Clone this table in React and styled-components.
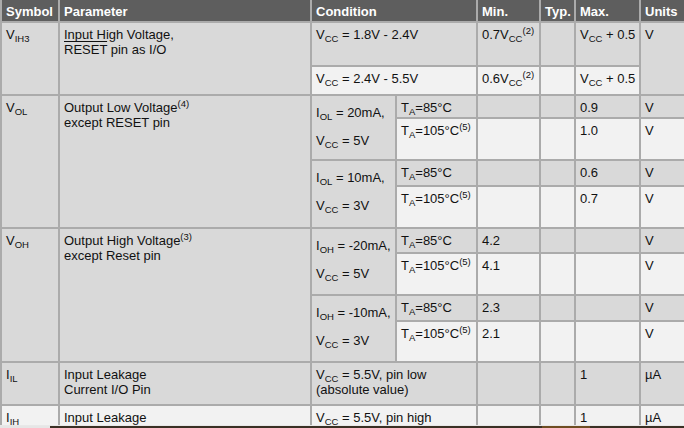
import React from 'react';
import styled, { createGlobalStyle } from 'styled-components';

const Global = createGlobalStyle`
  html, body {
    margin: 0;
    padding: 0;
    background: #f2f2f2;
    overflow: hidden;
  }
  body {
    font-family: "Liberation Sans", Arial, sans-serif;
  }
`;

const Page = styled.div`
  width: 684px;
  height: 428px;
  display: flex;
  flex-direction: column;
  overflow: hidden;
`;

const Frame = styled.div`
  height: 425px;
  overflow: hidden;
  flex: none;
`;

const Table = styled.table`
  width: 688px;
  table-layout: fixed;
  border-collapse: collapse;
  font-size: 13px;
  line-height: 15px;
  color: #111111;
`;

const Th = styled.th`
  background: #5e5e5e;
  color: #ffffff;
  font-weight: bold;
  text-align: left;
  padding: 3px 4px 2px;
  border: 2px solid #ababab;
  border-top: none;
  white-space: nowrap;
  overflow: hidden;
`;

const Td = styled.td`
  background: ${p => (p.$tone === 'light' ? '#f2f2f2' : '#d9d9d9')};
  vertical-align: top;
  text-align: left;
  padding: 4px 4px 2px;
  border: 2px solid #ababab;
  white-space: nowrap;
`;

const Tr = styled.tr`
  height: ${p => p.$h}px;
`;

const Sub = styled.sub`
  font-size: 9.5px;
  line-height: 0;
  vertical-align: -3px;
`;

const Sup = styled.sup`
  font-size: 9.5px;
  line-height: 0;
  vertical-align: 5px;
`;

const Over = styled.span`
  text-decoration: overline;
`;

const CondLines = styled.div`
  line-height: 28px;
  margin-top: -1px;
`;

const Strip = styled.div`
  height: 3px;
  display: flex;
  flex: none;
  border-top: 1px solid #e8e8e8;
`;

const StripPart = styled.div`
  width: ${p => p.$w}px;
  background: ${p => p.$c};
  flex: ${p => (p.$w ? 'none' : '1')};
`;

const V = ({ s }) => (
  <>
    V<Sub>{s}</Sub>
  </>
);

const I = ({ s }) => (
  <>
    I<Sub>{s}</Sub>
  </>
);

const Ta = ({ hot }) =>
  hot ? (
    <>
      T<Sub>A</Sub>=105°C<Sup>(5)</Sup>
    </>
  ) : (
    <>
      T<Sub>A</Sub>=85°C
    </>
  );

const TempRows = ({ sym, param, groups }) =>
  groups.map((g, gi) => (
    <React.Fragment key={gi}>
      <Tr $h={g.h[0]}>
        {gi === 0 && (
          <>
            <Td rowSpan={4}>{sym}</Td>
            <Td rowSpan={4}>{param}</Td>
          </>
        )}
        <Td rowSpan={2}>
          <CondLines>
            <div>{g.cond[0]}</div>
            <div>{g.cond[1]}</div>
          </CondLines>
        </Td>
        <Td>
          <Ta />
        </Td>
        <Td>{g.min[0]}</Td>
        <Td />
        <Td>{g.max[0]}</Td>
        <Td>V</Td>
      </Tr>
      <Tr $h={g.h[1]}>
        <Td $tone="light">
          <Ta hot />
        </Td>
        <Td $tone="light">{g.min[1]}</Td>
        <Td $tone="light" />
        <Td $tone="light">{g.max[1]}</Td>
        <Td $tone="light">V</Td>
      </Tr>
    </React.Fragment>
  ));

export default function App() {
  return (
    <Page>
      <Global />
      <Frame>
        <Table>
          <colgroup>
            <col style={{ width: 58 }} />
            <col style={{ width: 252 }} />
            <col style={{ width: 85 }} />
            <col style={{ width: 81 }} />
            <col style={{ width: 63 }} />
            <col style={{ width: 35 }} />
            <col style={{ width: 65 }} />
            <col style={{ width: 49 }} />
          </colgroup>
          <thead>
            <Tr $h={22}>
              <Th>Symbol</Th>
              <Th>Parameter</Th>
              <Th colSpan={2}>Condition</Th>
              <Th>Min.</Th>
              <Th>Typ.</Th>
              <Th>Max.</Th>
              <Th>Units</Th>
            </Tr>
          </thead>
          <tbody>
            <Tr $h={44}>
              <Td rowSpan={2}>
                <V s="IH3" />
              </Td>
              <Td rowSpan={2}>
                Input High Voltage,
                <br />
                <Over>RESET</Over> pin as I/O
              </Td>
              <Td colSpan={2}>
                <V s="CC" /> = 1.8V - 2.4V
              </Td>
              <Td>
                0.7<V s="CC" />
                <Sup>(2)</Sup>
              </Td>
              <Td />
              <Td>
                <V s="CC" /> + 0.5
              </Td>
              <Td rowSpan={2}>V</Td>
            </Tr>
            <Tr $h={29}>
              <Td $tone="light" colSpan={2}>
                <V s="CC" /> = 2.4V - 5.5V
              </Td>
              <Td $tone="light">
                0.6<V s="CC" />
                <Sup>(2)</Sup>
              </Td>
              <Td $tone="light" />
              <Td $tone="light">
                <V s="CC" /> + 0.5
              </Td>
            </Tr>

            <TempRows
              sym={<V s="OL" />}
              param={
                <>
                  Output Low Voltage<Sup>(4)</Sup>
                  <br />
                  except RESET pin
                </>
              }
              groups={[
                {
                  h: [23, 42],
                  cond: [
                    <>
                      <I s="OL" /> = 20mA,
                    </>,
                    <>
                      <V s="CC" /> = 5V
                    </>,
                  ],
                  min: ['', ''],
                  max: ['0.9', '1.0'],
                },
                {
                  h: [26, 42],
                  cond: [
                    <>
                      <I s="OL" /> = 10mA,
                    </>,
                    <>
                      <V s="CC" /> = 3V
                    </>,
                  ],
                  min: ['', ''],
                  max: ['0.6', '0.7'],
                },
              ]}
            />

            <TempRows
              sym={<V s="OH" />}
              param={
                <>
                  Output High Voltage<Sup>(3)</Sup>
                  <br />
                  except Reset pin
                </>
              }
              groups={[
                {
                  h: [25, 42],
                  cond: [
                    <>
                      <I s="OH" /> = -20mA,
                    </>,
                    <>
                      <V s="CC" /> = 5V
                    </>,
                  ],
                  min: ['4.2', '4.1'],
                  max: ['', ''],
                },
                {
                  h: [26, 41],
                  cond: [
                    <>
                      <I s="OH" /> = -10mA,
                    </>,
                    <>
                      <V s="CC" /> = 3V
                    </>,
                  ],
                  min: ['2.3', '2.1'],
                  max: ['', ''],
                },
              ]}
            />

            <Tr $h={43}>
              <Td>
                <I s="IL" />
              </Td>
              <Td>
                Input Leakage
                <br />
                Current I/O Pin
              </Td>
              <Td colSpan={2}>
                <V s="CC" /> = 5.5V, pin low
                <br />
                (absolute value)
              </Td>
              <Td />
              <Td />
              <Td>1</Td>
              <Td>µA</Td>
            </Tr>
            <Tr $h={24}>
              <Td $tone="light">
                <I s="IH" />
              </Td>
              <Td $tone="light">Input Leakage</Td>
              <Td $tone="light" colSpan={2}>
                <V s="CC" /> = 5.5V, pin high
              </Td>
              <Td $tone="light" />
              <Td $tone="light" />
              <Td $tone="light">1</Td>
              <Td $tone="light">µA</Td>
            </Tr>
          </tbody>
        </Table>
      </Frame>
      <Strip>
        <StripPart $w={50} $c="#e6e6e6" />
        <StripPart $w={492} $c="#3a3024" />
        <StripPart $w={48} $c="#6e4d22" />
        <StripPart $c="#3a3024" />
      </Strip>
    </Page>
  );
}
